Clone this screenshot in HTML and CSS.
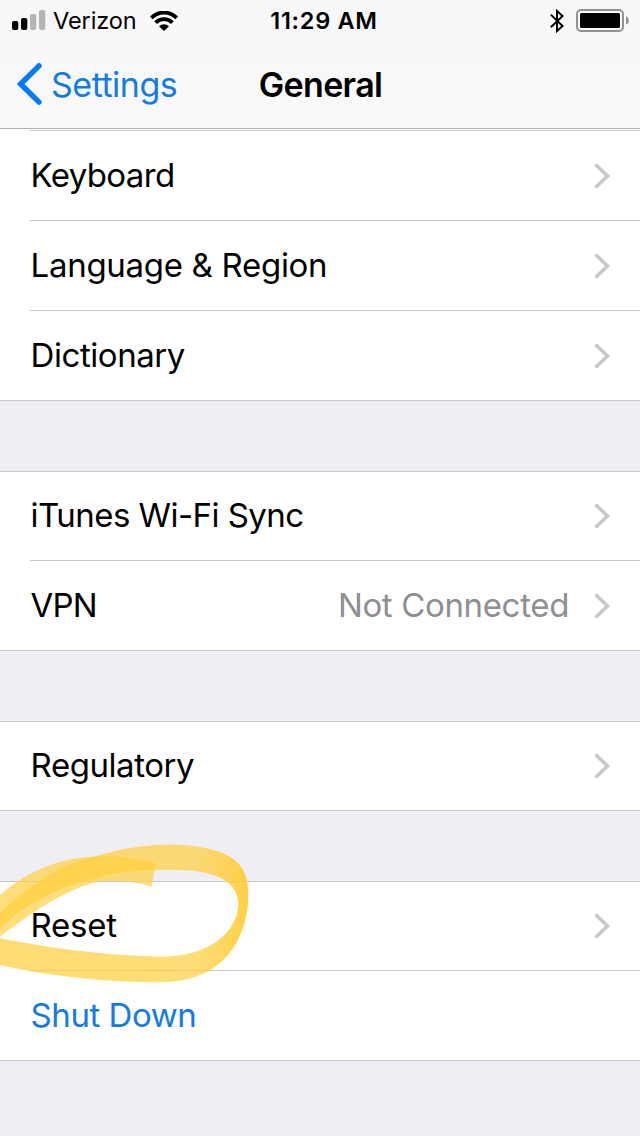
FILE: index.html
```html
<!DOCTYPE html>
<html lang="en">
<head>
    <meta charset="UTF-8">
    <meta name="viewport" content="width=device-width, initial-scale=1.0">
    <title>General</title>
    <link rel="stylesheet" href="styles.css">
</head>
<body>
    <svg class="symbols" width="0" height="0">
        <symbol id="chevron" viewBox="0 0 18 28">
            <path d="M2.5 2.5 L14.5 14 L2.5 25.5" fill="none" stroke="#c7c7cc" stroke-width="3.6"/>
        </symbol>
    </svg>

    <header class="header">
        <div class="status-bar">
            <div class="status-left">
                <svg class="signal" width="34" height="22" viewBox="0 0 34 22">
                    <rect x="0" y="11" width="6.3" height="9" rx="2" fill="#000"/>
                    <rect x="9" y="8" width="6.3" height="12" rx="2" fill="#000"/>
                    <rect x="18" y="4" width="6.3" height="16" rx="2" fill="#b5b5b7"/>
                    <rect x="27" y="0" width="6.3" height="20" rx="2" fill="#b5b5b7"/>
                </svg>
                <span class="carrier">Verizon</span>
                <svg class="wifi" width="28" height="20" viewBox="0 0 28 20">
                    <g fill="none" stroke="#000" stroke-width="3.8">
                        <path d="M1.3 6.8 A18 18 0 0 1 26.7 6.8"/>
                        <path d="M5.6 11.6 A12 12 0 0 1 22.4 11.6"/>
                    </g>
                    <path d="M9 15.2 A7.6 7.6 0 0 1 19 15.2 L14 20 Z" fill="#000"/>
                </svg>
            </div>
            <div class="time">11:29 AM</div>
            <div class="status-right">
                <svg class="bluetooth" width="14" height="24" viewBox="0 0 14 24">
                    <path d="M0.8 5.6 L12.6 17 L7 22 V2 L12.6 7 L0.8 18.2" fill="none" stroke="#000" stroke-width="2"/>
                </svg>
                <svg class="battery" width="54" height="24" viewBox="0 0 54 24">
                    <rect x="1" y="1" width="46" height="21" rx="4" fill="none" stroke="#919194" stroke-width="2"/>
                    <rect x="4" y="4" width="40" height="15" rx="1.6" fill="#000"/>
                    <path d="M50 7.5 C53.8 8.5 53.8 14.5 50 15.5 Z" fill="#919194"/>
                </svg>
            </div>
        </div>
        <div class="nav-bar">
            <div class="back">
                <svg width="26" height="42" viewBox="0 0 26 42">
                    <path d="M22 2.8 L3.6 21 L22 39.2" fill="none" stroke="#067bfa" stroke-width="5.4" stroke-linecap="round"/>
                </svg>
                <span class="back-label">Settings</span>
            </div>
            <h1>General</h1>
            <div></div>
        </div>
    </header>

    <main>
        <ul class="group first">
            <li><span class="label keyboard">Keyboard</span><svg class="chevron"><use href="#chevron"/></svg></li>
            <li><span class="label language">Language &amp; Region</span><svg class="chevron"><use href="#chevron"/></svg></li>
            <li><span class="label">Dictionary</span><svg class="chevron"><use href="#chevron"/></svg></li>
        </ul>
        <ul class="group">
            <li><span class="label itunes">iTunes Wi-Fi Sync</span><svg class="chevron"><use href="#chevron"/></svg></li>
            <li><span class="label vpn">VPN</span><span class="value">Not Connected</span><svg class="chevron"><use href="#chevron"/></svg></li>
        </ul>
        <ul class="group">
            <li><span class="label">Regulatory</span><svg class="chevron"><use href="#chevron"/></svg></li>
        </ul>
        <ul class="group marked">
            <li><span class="label reset">Reset</span><svg class="chevron"><use href="#chevron"/></svg></li>
            <li><span class="label action">Shut Down</span></li>
            <!-- highlighter loop around Reset -->
            <svg class="marker" width="270" height="180" viewBox="0 0 810 540">
                <defs>
                    <linearGradient id="ink" gradientUnits="userSpaceOnUse" x1="0" y1="0" x2="745" y2="0">
                        <stop offset="0" stop-color="#ffcf3c" stop-opacity="0.72"/>
                        <stop offset="0.8" stop-color="#ffcf3c" stop-opacity="0.7"/>
                        <stop offset="1" stop-color="#ffcb30" stop-opacity="0.9"/>
                    </linearGradient>
                </defs>
                <path fill="#ffcf3c" fill-opacity="0.68" d="M467 130 C400 108 300 100 200 120 C120 140 50 180 0 225 L0 350 C80 290 180 215 290 186 C350 180 400 184 455 200 Z"/>
                <path fill="url(#ink)" d="M0 280 C90 190 190 130 290 108 C430 63 600 60 690 110 C740 140 748 190 744 250 C735 350 680 487 480 487 C330 487 150 470 0 435 L0 355 C150 385 300 405 480 410 C620 412 715 340 715 250 C712 190 660 150 520 150 C400 150 350 155 290 175 C170 200 70 260 0 325 Z"/>
            </svg>
        </ul>
    </main>
</body>
</html>
```

FILE: styles.css
```css
* {
    box-sizing: border-box;
    margin: 0;
    padding: 0;
}
body {
    width: 640px;
    height: 1136px;
    overflow: hidden;
    background-color: #efeef5;
    color: #000;
    font-family: Inter, 'Liberation Sans', sans-serif;
}
.symbols {
    display: block;
}

/* Header */
.header {
    height: 129px;
    background: linear-gradient(to bottom, #f7f7f9, #f9f9f9);
    border-bottom: 1px solid #b2b2b4;
}
.status-bar {
    display: grid;
    grid-template-columns: 1fr auto 1fr;
    align-items: center;
    height: 41px;
    padding: 0 10px 0 12px;
}
.status-left,
.status-right {
    display: flex;
    align-items: center;
}
.status-right {
    justify-content: flex-end;
}
.signal {
    margin-top: 1px;
}
.carrier {
    margin-left: 7px;
    font-size: 23.5px;
    letter-spacing: -0.1px;
    line-height: 41px;
}
.wifi {
    margin-left: 13px;
}
.time {
    font-size: 23.5px;
    font-weight: 600;
    letter-spacing: 0.7px;
    line-height: 41px;
    padding-left: 6px;
}
.bluetooth {
    margin-right: 12px;
}
.nav-bar {
    display: grid;
    grid-template-columns: 1fr auto 1fr;
    align-items: center;
    height: 86px;
    padding: 0 16px 0 17px;
}
.back {
    display: flex;
    align-items: center;
    color: #147be6;
}
.back-label {
    margin-left: 8px;
    font-size: 34px;
    letter-spacing: -0.5px;
}
h1 {
    font-size: 34px;
    font-weight: 600;
    letter-spacing: -0.65px;
}

/* Settings list */
.group {
    margin-top: 70px;
    background-color: #fff;
    border-top: 1px solid #c8c7cc;
    border-bottom: 1px solid #c8c7cc;
    list-style: none;
}
.group.first {
    margin-top: 0;
    padding-top: 1px;
    border-top: none;
}
.group li {
    display: flex;
    align-items: center;
    height: 90px;
    margin-left: 30px;
    padding-right: 29px;
    border-bottom: 1px solid #c8c7cc;
}
.group li:first-child {
    height: 89px;
}
.group li:last-of-type {
    height: 89px;
    border-bottom: none;
}
.group li:only-of-type {
    height: 88px;
}
.group.first li:first-child {
    height: 91px;
    border-top: 1px solid #c8c7cc;
}
.label,
.value {
    padding-bottom: 2px;
    font-size: 33px;
    letter-spacing: -0.45px;
    line-height: 40px;
    white-space: nowrap;
}
.label {
    padding-left: 0.6px;
}
.keyboard {
    letter-spacing: -0.65px;
}
.language {
    letter-spacing: -0.3px;
}
.itunes {
    letter-spacing: -0.55px;
}
.vpn {
    letter-spacing: -0.9px;
}
.reset {
    letter-spacing: -0.25px;
}
.value {
    margin-left: auto;
    margin-right: 24px;
    letter-spacing: -0.35px;
    color: #8e8e93;
}
.chevron {
    width: 18px;
    height: 28px;
    margin-left: auto;
}
.value + .chevron {
    margin-left: 0;
}
.action {
    color: #147be6;
}
.marked {
    position: relative;
}
.marker {
    position: absolute;
    left: 0;
    top: -62px;
    pointer-events: none;
}
```
